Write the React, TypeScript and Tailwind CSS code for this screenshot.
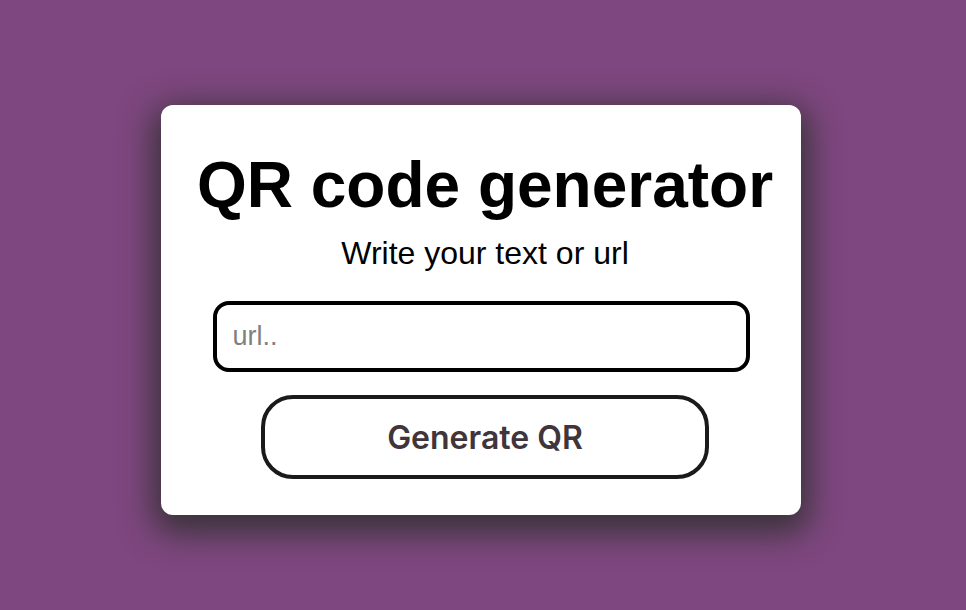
export default function App() {
  return (
    <main className="flex min-h-screen items-center justify-center bg-[#7e477f] pt-2.5 pr-1 font-['Liberation_Sans',Arial,sans-serif] text-black">
      <form
        className="flex w-full max-w-[640px] flex-col items-center rounded-xl bg-white px-8 pt-11 pb-9 shadow-[0_10px_32px_8px_#383338]"
        onSubmit={(event) => event.preventDefault()}
      >
        <div className="flex flex-col items-center pl-2 text-center">
          <h1 className="text-[64px] leading-[72px] font-bold whitespace-nowrap">QR code generator</h1>
          <label htmlFor="qr-text" className="mt-3 text-[32px] leading-10">
            Write your text or url
          </label>
        </div>
        <input
          id="qr-text"
          type="text"
          placeholder="url.."
          className="mt-7 h-[71px] w-full max-w-[537px] rounded-2xl border-4 border-black px-4 text-[27px] outline-none placeholder:text-[#808080]"
        />
        <div className="mt-[23px] flex w-full justify-center pl-2">
          <button
            type="submit"
            className="h-[84px] w-full max-w-[448px] rounded-[32px] border-4 border-[#1a1a1a] bg-white pt-0.5 font-['Inter',sans-serif] text-[32px] font-semibold text-[#3f353b]"
          >
            Generate QR
          </button>
        </div>
      </form>
    </main>
  );
}
